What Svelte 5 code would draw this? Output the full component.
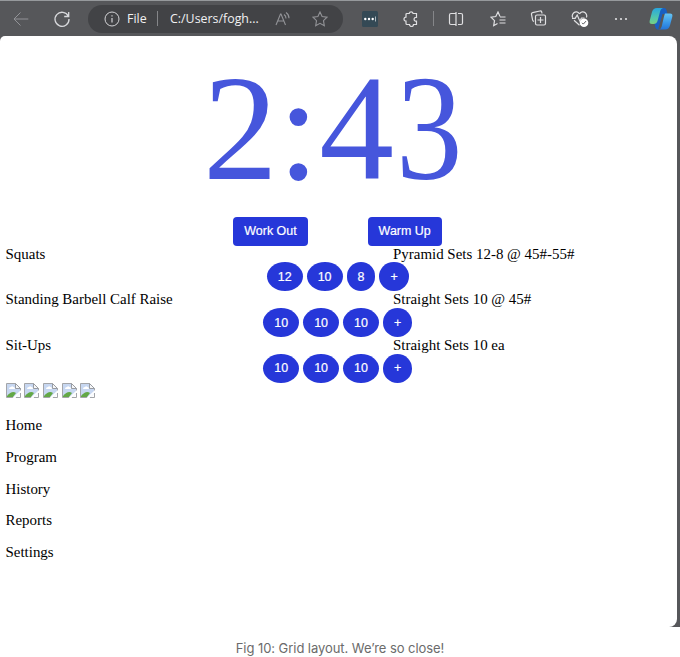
<script>
  const exercises = [
    { name: 'Squats', plan: 'Pyramid Sets 12-8 @ 45#-55#', sets: ['12', '10', '8', '+'] },
    { name: 'Standing Barbell Calf Raise', plan: 'Straight Sets 10 @ 45#', sets: ['10', '10', '10', '+'] },
    { name: 'Sit-Ups', plan: 'Straight Sets 10 ea', sets: ['10', '10', '10', '+'] }
  ];
  const links = ['Home', 'Program', 'History', 'Reports', 'Settings'];
</script>

<div class="window">
  <header class="toolbar">
    <svg class="back" width="16" height="16" viewBox="0 0 16 16"><path d="M15.3 8H1M7.5 1.5 1 8l6.500 6.500" stroke="#929397" /></svg>
    <svg class="reload" width="18" height="18" viewBox="0 0 18 18"><path d="M15.300 6.200A7 7 0 1 0 16 9M15.700 2v4.500h-4.500" stroke="#d8d9dc" stroke-width="1.300" /></svg>
    <div class="address">
      <svg class="info" width="16" height="16" viewBox="0 0 16 16"><circle cx="8" cy="8" r="7" stroke="#d3d3d6" /><path d="M8 7v4.500M8 4.200v1.300" stroke="#d3d3d6" stroke-width="1.200" /></svg>
      <span class="scheme">File</span>
      <i class="rule"></i>
      <span class="path">C:/Users/fogh...</span>
      <svg class="aloud" width="16" height="16" viewBox="0 0 16 16"><path d="M1 14 5.500 3h.5l4.500 11M2.600 10h6.300M9 3.500q2 1.300 2 4M11 1.500q3 2 3 5.700" stroke="#929397" stroke-width="1.100" /></svg>
      <svg class="star" width="16" height="16" viewBox="0 0 16 16"><path d="m8 1 2.100 4.500 4.900.7-3.500 3.500.8 5L8 12.300l-4.300 2.400.8-5L1 6.200l4.900-.7z" stroke="#929397" stroke-width="1.100" /></svg>
    </div>
    <svg class="password" width="16" height="16" viewBox="0 0 16 16"><rect width="16" height="16" rx="1.500" fill="#344955" /><path d="M13.500 5.500v5" stroke="#aebac1" /><g fill="#fff"><circle cx="3.300" cy="8" r="1.200" /><circle cx="7" cy="8" r="1.200" /><circle cx="10.700" cy="8" r="1.200" /></g></svg>
    <svg class="puzzle" width="16" height="16" viewBox="0 0 16 16"><path d="M4 2.500h2.200a2 2 0 0 1 3.900 0h3.400v3.800a2 2 0 1 0 0 3.900v3.300h-3a2 2 0 0 1-4 0H4q-1 0-1-1v-2.300a2 2 0 0 1 0-4V3.500q0-1 1-1z" stroke="#e0e0e2" stroke-width="1.200" /></svg>
    <i class="rule split-rule"></i>
    <svg class="split" width="16" height="16" viewBox="0 0 16 16"><path d="M6 2.500H3q-1.500 0-1.500 1.500v8q0 1.500 1.500 1.500h3M10 2.500h3q1.500 0 1.500 1.500v8q0 1.500-1.500 1.500h-3M8 1v14M5.500 2.500H8M5.500 13.500H8" stroke="#e0e0e2" stroke-width="1.200" /></svg>
    <svg class="favorites" width="17" height="16" viewBox="0 0 17 16"><path d="M10 5.500 8 1 5.800 5.500 1 6.200l3.500 3.500-.8 5L7.500 12.500M10 6h5.500M9.500 9h6M9.500 12h6" stroke="#e0e0e2" stroke-width="1.200" /></svg>
    <svg class="collections" width="17" height="17" viewBox="0 0 17 17"><path d="M12 3.500 11.700 2q-.4-1.300-1.800-1L2.600 2.600Q1.200 3 1.500 4.300L2.600 10q.2 1 1.400 1.500M7 5h7q1.500 0 1.500 1.500v7q0 1.500-1.500 1.500H7q-1.500 0-1.500-1.500v-7Q5.500 5 7 5zM10.500 7v6M7.500 10h6" stroke="#e0e0e2" stroke-width="1.200" /></svg>
    <svg class="heart" width="18" height="18" viewBox="0 0 18 18"><path d="M8.500 3.800C7 1.500 4.500 1.300 2.800 2.800 1.200 4.200 1 6 1.600 7.500M8.500 3.800c1.500-2.300 4-2.500 5.700-1 1.600 1.400 1.800 3.200 1.200 4.700M1 8.300h3.200l2-3.300 2.600 6 1.700-3h3M3 10.300l5.500 5" stroke="#e0e0e2" stroke-width="1.200" /><circle cx="13" cy="12.700" r="4.300" fill="#fff" /><path d="m11 12.800 1.300 1.300 2.700-3" stroke="#56575a" /></svg>
    <svg class="more" width="14" height="16" viewBox="0 0 14 16"><g fill="#e0e0e2"><circle cx="2" cy="8" r="1.100" /><circle cx="7" cy="8" r="1.100" /><circle cx="12" cy="8" r="1.100" /></g></svg>
    <svg class="copilot" width="24" height="22" viewBox="0 0 24 22">
      <defs>
        <linearGradient id="leaf" x1="0" y1="0" x2="0" y2="1"><stop stop-color="#28a6df" /><stop offset=".6" stop-color="#51c6ac" /><stop offset="1" stop-color="#77cf83" /></linearGradient>
        <linearGradient id="wave" x1="0" y1="0" x2="0" y2="1"><stop stop-color="#65c5f4" /><stop offset=".6" stop-color="#3795e8" /><stop offset="1" stop-color="#2374d8" /></linearGradient>
      </defs>
      <path d="M10 0h5q2 0 2.500 2l1 4h-5l-4 14Q9 21 12 21.500H9q-2 0-2.600-2L5 14z" fill="#195fc1" />
      <path d="M8 0h6q-2 .4-2.700 2.800L8.500 13q-.9 3-4 3H3q-3 0-2.300-3.300L3 4Q4.200 0 8 0z" fill="url(#leaf)" />
      <path d="M16 5.500h5q3 0 2.300 3.200l-2.200 8.300q-1.200 4.500-5 4.500H10q2-.5 2.700-3L15 8.500q.7-2.300 1-3z" fill="url(#wave)" />
    </svg>
  </header>

  <main class="page">
    <div class="clock">2:4<span class="last-digit">3</span></div>
    <div class="modes"><button>Work Out</button><button>Warm Up</button></div>
    {#each exercises as exercise}
      <section class="exercise">
        <span>{exercise.name}</span><span>{exercise.plan}</span>
        <div class="sets">
          {#each exercise.sets as reps}<button>{reps}</button>{/each}
        </div>
      </section>
    {/each}
    <div class="images">
      {#each links as _}
        <svg width="15" height="15" viewBox="0 0 15 15">
          <path d="M.5.500h9l5 5v9H.5z" fill="#c7d7f1" stroke="#a3a5a9" />
          <path d="M3 6q0-2 2-2 1-1.500 2.500 0Q9 4 9 6z" fill="#fff" />
          <path d="M1 14v-1q5-6 9-3l-3 4z" fill="#63a846" />
          <path d="M9.500.500v5h5z" fill="#f5f6f8" stroke="#999ca2" />
          <path d="M6.500 15 15 7v2.500L9.500 15z" fill="#fff" />
          <path d="M9.500 15 15 9.700V15z" fill="#fff" /><path d="M10 14.500h4.500V10" stroke="#a3a5a9" />
        </svg>
      {/each}
    </div>
    <nav>{#each links as link}<p>{link}</p>{/each}</nav>
  </main>
</div>
<p class="caption">Fig 10: Grid layout. We’re so close!</p>

<style>
  :global(body) { background: #fff; }
  .window { box-sizing: border-box; width: 680px; height: 627px; background: linear-gradient(90deg, #fff 50%, #56575a 50%); }
  .toolbar { box-sizing: border-box; width: 680px; height: 36px; border-top: 1px solid #96999c; display: flex; align-items: center; background: #56575a; box-shadow: 0 5px #56575a; }
  svg { display: block; flex: none; fill: none; }
  .back { margin-left: 12.500px; }
  .reload { margin-left: 24px; }
  .address { box-sizing: border-box; display: flex; align-items: center; flex: none; width: 255px; height: 28px; margin-left: 17.500px; padding-left: 16px; border-radius: 14px; background: #424346; color: #f1f1f2; font: 12.400px "Open Sans", sans-serif; white-space: nowrap; }
  .scheme { width: 20px; margin-left: 7px; }
  .rule { width: 1px; height: 15px; background: #858689; flex: none; }
  .address .rule { margin-left: 10px; }
  .path { width: 92px; margin-left: 12px; }
  .aloud { margin-left: 13px; }
  .star { margin-left: 21px; }
  .password { margin-left: 18.500px; }
  .puzzle { margin-left: 25.500px; }
  .split-rule { margin-left: 14px; }
  .split { margin-left: 14px; }
  .favorites { margin-left: 25.500px; }
  .collections { margin-left: 23.500px; }
  .heart { margin-left: 24px; }
  .more { margin-left: 25px; }
  .copilot { margin-left: 20.500px; }
  .page { position: relative; box-sizing: border-box; width: 677px; height: 591px; padding: 9.500px 5.500px 0; border-radius: 5px 8px 8px 0; background: #fff; color: #000; font: 14.950px/16.800px "Liberation Serif", serif; }
  .clock { height: 171.300px; padding-left: 197.500px; color: #4656dc; font-size: 149.500px; line-height: 165px; white-space: nowrap; }
  .last-digit { display: inline-block; transform: translateX(2px) scaleX(.89); transform-origin: left; }
  .modes { display: flex; justify-content: center; gap: 60px; height: 28.800px; margin-right: 2px; }
  button { height: 28.800px; padding: 0 11px; border: 0; background: #2637d9; color: #fff; font: 12.450px "Liberation Sans", sans-serif; -webkit-text-stroke: .2px #fff; }
  .modes button { border-radius: 4px; }
  .exercise { display: grid; grid-template-columns: 387.500px 1fr; grid-template-rows: 16.800px 29px; white-space: nowrap; }
  .sets { grid-column: 1 / -1; display: flex; justify-content: center; gap: 4px; margin-right: 1.500px; }
  .sets button { border-radius: 50%; }
  .images { display: flex; gap: 3.700px; height: 34px; }
  nav p { margin: 0 0 15px; }
  .caption { margin: 11px 0 0; color: #6b6b6b; text-align: center; font: 13px/20px Inter, "Liberation Sans", sans-serif; letter-spacing: -.06px; }
</style>
